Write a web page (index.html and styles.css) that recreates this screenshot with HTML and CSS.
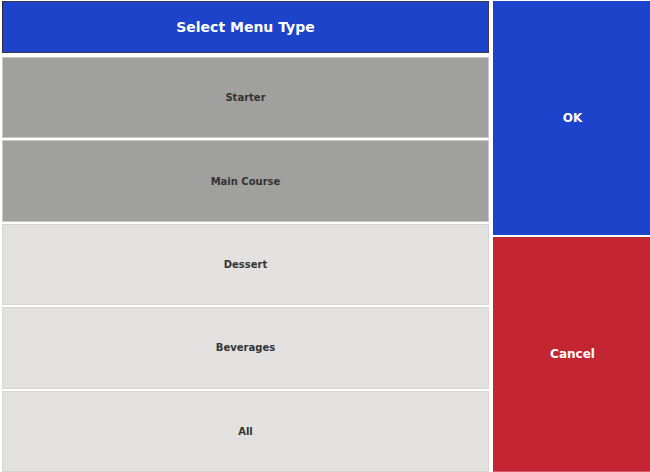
FILE: index.html
```html
<!DOCTYPE html>
<html>
<head>
<meta charset="utf-8">
<link rel="stylesheet" href="styles.css">
</head>
<body>
<div class="app">
  <div class="left">
    <div class="header">Select Menu Type</div>
    <div class="list">
      <div class="item selected">Starter</div>
      <div class="item selected">Main Course</div>
      <div class="item">Dessert</div>
      <div class="item">Beverages</div>
      <div class="item">All</div>
    </div>
  </div>
  <div class="right">
    <div class="btn ok">OK</div>
    <div class="btn cancel">Cancel</div>
  </div>
</div>
</body>
</html>
```

FILE: styles.css
```css
html, body {
  margin: 0;
  padding: 0;
  background: #ffffff;
}
.app {
  width: 650px;
  height: 472px;
  display: flex;
  font-family: "DejaVu Sans", Verdana, sans-serif;
  font-weight: bold;
}
.left {
  width: 489px;
  padding: 1px 0 0 2px;
  display: flex;
  flex-direction: column;
  box-sizing: border-box;
}
.header {
  height: 52px;
  box-sizing: border-box;
  background: #1c43c9;
  border: 1px solid #3a3a4a;
  border-left-color: #2a2a3a;
  color: #ffffff;
  font-size: 14px;
  display: flex;
  align-items: center;
  justify-content: center;
  margin-bottom: 4px;
}
.list {
  flex: 1;
  display: flex;
  flex-direction: column;
  gap: 2px;
}
.item {
  flex: 1;
  box-sizing: border-box;
  border: 1px solid #d6d6d3;
  background: #e2e1df;
  color: #333333;
  font-size: 10px;
  display: flex;
  align-items: center;
  justify-content: center;
}
.item.selected {
  background: #a0a09e;
  border-color: #c8c8c6;
}
.right {
  flex: 1;
  margin-left: 4px;
  padding-top: 1px;
  display: flex;
  flex-direction: column;
  gap: 2px;
}
.btn {
  flex: 1;
  display: flex;
  align-items: center;
  justify-content: center;
  color: #ffffff;
  font-size: 12px;
  padding-left: 2px;
}
.ok {
  background: #1c43c9;
}
.cancel {
  background: #c32632;
  border-bottom: 1px solid #d9606a;
}
```
